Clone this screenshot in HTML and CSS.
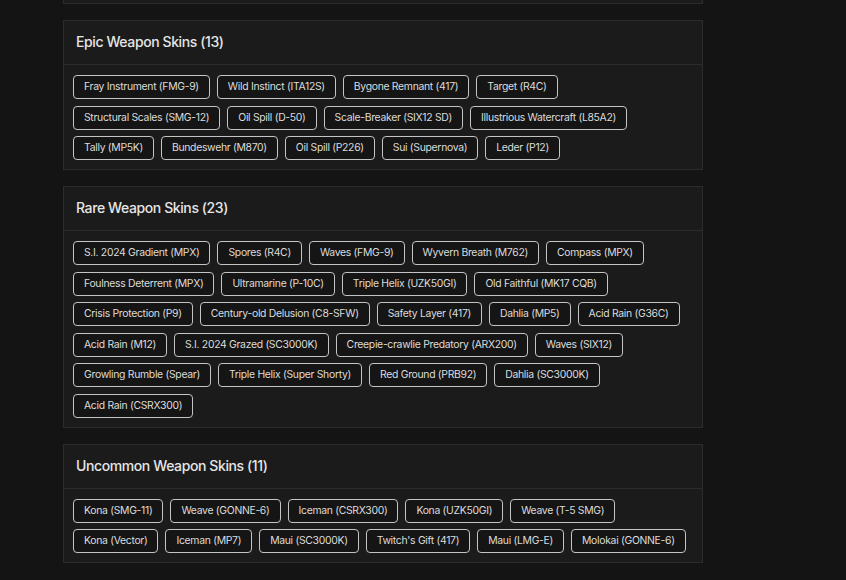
FILE: index.html
```html
<!DOCTYPE html>
<html lang="en">
<head>
    <meta charset="UTF-8">
    <meta name="viewport" content="width=device-width, initial-scale=1.0">
    <title>Weapon Skins</title>
    <link rel="stylesheet" href="styles.css">
</head>
<body>
    <div class="page">
        <!-- bottom edge of the previous section, scrolled out of view -->
        <div class="card card-tail"></div>

        <div class="card">
            <div class="card-header">Epic Weapon Skins (13)</div>
            <div class="tags">
                <span class="tag">Fray Instrument (FMG-9)</span>
                <span class="tag">Wild Instinct (ITA12S)</span>
                <span class="tag">Bygone Remnant (417)</span>
                <span class="tag">Target (R4C)</span>
                <span class="tag">Structural Scales (SMG-12)</span>
                <span class="tag">Oil Spill (D-50)</span>
                <span class="tag">Scale-Breaker (SIX12 SD)</span>
                <span class="tag">Illustrious Watercraft (L85A2)</span>
                <span class="tag">Tally (MP5K)</span>
                <span class="tag">Bundeswehr (M870)</span>
                <span class="tag">Oil Spill (P226)</span>
                <span class="tag">Sui (Supernova)</span>
                <span class="tag">Leder (P12)</span>
            </div>
        </div>

        <div class="card">
            <div class="card-header">Rare Weapon Skins (23)</div>
            <div class="tags">
                <span class="tag">S.I. 2024 Gradient (MPX)</span>
                <span class="tag">Spores (R4C)</span>
                <span class="tag">Waves (FMG-9)</span>
                <span class="tag">Wyvern Breath (M762)</span>
                <span class="tag">Compass (MPX)</span>
                <span class="tag">Foulness Deterrent (MPX)</span>
                <span class="tag">Ultramarine (P-10C)</span>
                <span class="tag">Triple Helix (UZK50GI)</span>
                <span class="tag">Old Faithful (MK17 CQB)</span>
                <span class="tag">Crisis Protection (P9)</span>
                <span class="tag">Century-old Delusion (C8-SFW)</span>
                <span class="tag">Safety Layer (417)</span>
                <span class="tag">Dahlia (MP5)</span>
                <span class="tag">Acid Rain (G36C)</span>
                <span class="tag">Acid Rain (M12)</span>
                <span class="tag">S.I. 2024 Grazed (SC3000K)</span>
                <span class="tag">Creepie-crawlie Predatory (ARX200)</span>
                <span class="tag">Waves (SIX12)</span>
                <span class="tag">Growling Rumble (Spear)</span>
                <span class="tag">Triple Helix (Super Shorty)</span>
                <span class="tag">Red Ground (PRB92)</span>
                <span class="tag">Dahlia (SC3000K)</span>
                <span class="tag">Acid Rain (CSRX300)</span>
            </div>
        </div>

        <div class="card">
            <div class="card-header">Uncommon Weapon Skins (11)</div>
            <div class="tags">
                <span class="tag">Kona (SMG-11)</span>
                <span class="tag">Weave (GONNE-6)</span>
                <span class="tag">Iceman (CSRX300)</span>
                <span class="tag">Kona (UZK50GI)</span>
                <span class="tag">Weave (T-5 SMG)</span>
                <span class="tag">Kona (Vector)</span>
                <span class="tag">Iceman (MP7)</span>
                <span class="tag">Maui (SC3000K)</span>
                <span class="tag">Twitch's Gift (417)</span>
                <span class="tag">Maui (LMG-E)</span>
                <span class="tag">Molokai (GONNE-6)</span>
            </div>
        </div>
    </div>
</body>
</html>
```

FILE: styles.css
```css
body {
    font-family: Inter, "Liberation Sans", sans-serif;
    margin: 0;
    background-color: #141414;
    color: #dcdcdc;
    overflow: hidden;
}

.page {
    width: 640px;
    margin-left: 63px;
}

.card {
    background: #1b1b1b;
    border: 1px solid #2c2c2c;
    margin-bottom: 16px;
}

.card-tail {
    height: 3px;
    border-top: none;
}

.card-header {
    font-size: 14px;
    font-weight: 500;
    letter-spacing: -0.4px;
    line-height: 20px;
    padding: 11px 12px 12px;
    color: #e6e6e6;
    border-bottom: 1px solid #2c2c2c;
}

.tags {
    display: flex;
    flex-wrap: wrap;
    gap: 6.5px 7px;
    padding: 10px 9px 9px;
}

.tag {
    font-size: 10.4px;
    letter-spacing: -0.3px;
    line-height: 14px;
    padding: 4px 10px;
    border: 1px solid #c4c4c4;
    border-radius: 4px;
    background: #151515;
    color: #dcdcdc;
    white-space: nowrap;
}
```
